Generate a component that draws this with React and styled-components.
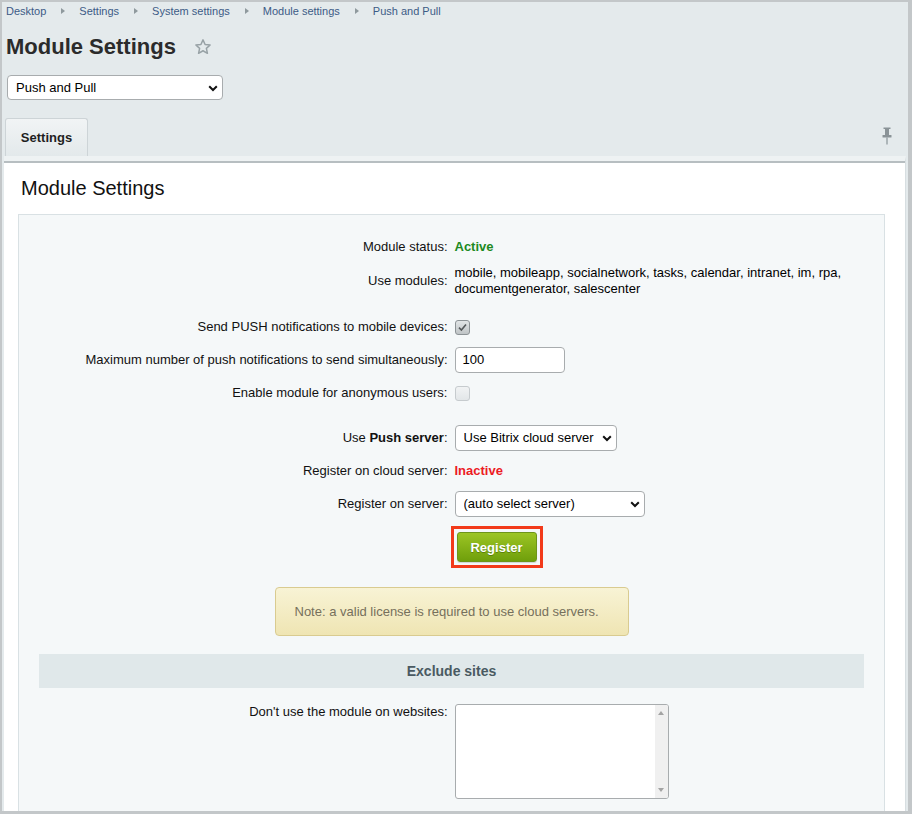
import React from 'react';
import styled, { createGlobalStyle } from 'styled-components';

const GlobalStyle = createGlobalStyle`
  html, body {
    margin: 0;
    padding: 0;
    background: #ffffff;
  }
  body {
    font-family: "Liberation Sans", Arial, sans-serif;
    font-size: 13px;
    color: #000;
  }
  * {
    box-sizing: border-box;
  }
`;

const Frame = styled.div`
  width: 912px;
  height: 814px;
  overflow: hidden;
  border-style: solid;
  border-color: #c3c7c9;
  border-width: 2px 4px 3px 2px;
  background: #e4eaec;
  padding: 0 0 0 2px;
`;

const Breadcrumbs = styled.div`
  display: flex;
  align-items: center;
  height: 17px;
  padding: 1px 0 0 2px;
  font-size: 11px;
  color: #3c5b86;
`;

const Crumb = styled.span`
  line-height: 14px;
`;

const CrumbArrow = styled.span`
  display: inline-block;
  width: 0;
  height: 0;
  margin: 0 14px 0 15px;
  border-left: 4px solid #8f999d;
  border-top: 3.5px solid transparent;
  border-bottom: 3.5px solid transparent;
`;

const TitleRow = styled.div`
  display: flex;
  align-items: center;
  gap: 18px;
  margin-top: 15px;
  padding-left: 2px;
`;

const Title = styled.h1`
  margin: 0;
  font-size: 22px;
  line-height: 26px;
  font-weight: bold;
  color: #2b2b2b;
`;

const SelectWrap = styled.div`
  position: relative;
  display: inline-block;
  width: ${p => p.$width}px;
  height: ${p => p.$height || 26}px;
`;

const Select = styled.select`
  appearance: none;
  -webkit-appearance: none;
  width: 100%;
  height: 100%;
  margin: 0;
  padding: 0 16px 0 8px;
  border: 1px solid #a8acae;
  border-radius: 4px;
  background: #fff;
  font-family: "Liberation Sans", Arial, sans-serif;
  font-size: 13px;
  color: #000;
  outline: none;
`;

const Chevron = styled.svg`
  position: absolute;
  right: 5px;
  top: 50%;
  margin-top: -3px;
  pointer-events: none;
`;

const ModuleSelect = styled.div`
  margin: 15px 0 0 3px;
`;

const TabBar = styled.div`
  display: flex;
  align-items: flex-end;
  justify-content: space-between;
  height: 38px;
  margin-top: 18px;
  padding: 0 16px 0 1px;
`;

const Tab = styled.div`
  width: 83px;
  height: 38px;
  display: flex;
  align-items: center;
  justify-content: center;
  border: 1px solid #cdd4d7;
  border-bottom: none;
  border-radius: 3px 3px 0 0;
  background: linear-gradient(#f1f4f5, #e3e9eb);
  font-weight: bold;
  font-size: 13px;
  color: #1f1f1f;
`;

const Pin = styled.svg`
  align-self: center;
  margin-bottom: 2px;
`;

const Panel = styled.div`
  margin-right: 2px;
  border-top: 5px solid #eef2f3;
  border-right: 1px solid #d7dee1;
`;

const PanelBody = styled.div`
  background: #fff;
  border-top: 2px solid #b7bec1;
  padding: 13px 20px 0 14px;
  height: 700px;
`;

const PanelHeading = styled.h2`
  margin: 0 0 14px 3px;
  font-size: 20px;
  line-height: 24px;
  font-weight: normal;
  color: #111;
`;

const FormBox = styled.div`
  background: #f5f8f9;
  border: 1px solid #d9e1e4;
  padding: 15px 20px 0 20px;
  height: 640px;
`;

const Row = styled.div`
  display: grid;
  grid-template-columns: 1fr 1fr;
  align-items: ${p => (p.$top ? 'start' : 'center')};
  min-height: ${p => p.$height || 33}px;
`;

const Label = styled.div`
  text-align: right;
  padding-right: 4px;
  line-height: 16px;
  color: #111;
`;

const Value = styled.div`
  padding-left: 3px;
  line-height: 16px;
  display: flex;
  align-items: center;
`;

const Status = styled.span`
  font-weight: bold;
  color: ${p => (p.$ok ? '#1d8a1f' : '#ec1b23')};
`;

const Spacer = styled.div`
  height: ${p => p.$h}px;
`;

const Check = styled.span`
  display: inline-block;
  width: 15px;
  height: 15px;
  margin-top: 1px;
  border-radius: 3px;
  border: 1px solid ${p => (p.$checked ? '#8d9396' : '#c6cbce')};
  background: ${p =>
    p.$checked ? 'linear-gradient(#e2e5e6, #bfc4c6)' : 'linear-gradient(#f1f3f4, #e2e6e8)'};
  position: relative;
`;

const CheckMark = styled.svg`
  position: absolute;
  left: 1px;
  top: 1px;
`;

const TextInput = styled.input`
  width: 110px;
  height: 26px;
  border: 1px solid #a8acae;
  border-radius: 4px;
  padding: 0 7px;
  font-family: "Liberation Sans", Arial, sans-serif;
  font-size: 13px;
  color: #000;
  outline: none;
`;

const ButtonRow = styled.div`
  display: grid;
  grid-template-columns: 1fr 1fr;
  margin-top: 6px;
`;

const RegisterFrame = styled.div`
  grid-column: 2;
  justify-self: start;
  margin-left: -1px;
  padding: 3px;
  border: 3px solid #f23a1a;
`;

const RegisterButton = styled.button`
  display: block;
  width: 80px;
  height: 30px;
  border: 1px solid #6d951a;
  border-radius: 3px;
  background: linear-gradient(#9cc524, #6f9f0b);
  color: #fff;
  font-family: "Liberation Sans", Arial, sans-serif;
  font-size: 13px;
  font-weight: bold;
  text-shadow: 0 1px 0 rgba(60, 90, 0, 0.5);
  box-shadow: 0 1px 1px rgba(0, 0, 0, 0.15);
  cursor: pointer;
`;

const NoteWrap = styled.div`
  display: flex;
  justify-content: center;
  margin-top: 19px;
`;

const Note = styled.div`
  width: 354px;
  height: 49px;
  display: flex;
  align-items: center;
  padding-left: 19px;
  border: 1px solid #d9cb90;
  border-radius: 4px;
  background: linear-gradient(#f8f3d5, #efe5b3);
  color: #76705c;
`;

const SectionHeader = styled.div`
  margin-top: 18px;
  height: 34px;
  display: flex;
  align-items: center;
  justify-content: center;
  background: #e0e8ea;
  font-size: 14px;
  font-weight: bold;
  color: #4a5a62;
`;

const TextAreaBox = styled.div`
  display: flex;
  width: 214px;
  height: 95px;
  border: 1px solid #a8acae;
  border-radius: 3px;
  background: #fff;
  overflow: hidden;
`;

const TextArea = styled.textarea`
  flex: 1;
  min-width: 0;
  border: none;
  resize: none;
  outline: none;
  background: transparent;
  font-family: "Liberation Sans", Arial, sans-serif;
  font-size: 13px;
`;

const ScrollTrack = styled.div`
  width: 13px;
  display: flex;
  flex-direction: column;
  justify-content: space-between;
  align-items: center;
  padding: 6px 0;
  background: #f0f0f0;
`;

const ScrollArrow = styled.span`
  width: 0;
  height: 0;
  border-left: 3.5px solid transparent;
  border-right: 3.5px solid transparent;
  ${p =>
    p.$down ? 'border-top: 4px solid #a3a3a3;' : 'border-bottom: 4px solid #a3a3a3;'}
`;

const DropSelect = ({ width, height, children }) => (
  <SelectWrap $width={width} $height={height}>
    <Select defaultValue={children[0]}>
      {children.map(o => (
        <option key={o}>{o}</option>
      ))}
    </Select>
    <Chevron width="10" height="7" viewBox="0 0 10 7">
      <path d="M1.2 1.2 L5 5 L8.8 1.2" fill="none" stroke="#111" strokeWidth="2" />
    </Chevron>
  </SelectWrap>
);

const CheckBox = ({ checked }) => (
  <Check $checked={checked}>
    {checked && (
      <CheckMark width="11" height="11" viewBox="0 0 11 11">
        <path d="M2 5.6 L4.4 8 L9 2.6" fill="none" stroke="#55595b" strokeWidth="1.6" />
      </CheckMark>
    )}
  </Check>
);

const crumbs = ['Desktop', 'Settings', 'System settings', 'Module settings', 'Push and Pull'];

const App = () => {
  return (
    <>
      <GlobalStyle />
      <Frame>
        <Breadcrumbs>
          {crumbs.map((c, i) => (
            <React.Fragment key={c}>
              {i > 0 && <CrumbArrow />}
              <Crumb>{c}</Crumb>
            </React.Fragment>
          ))}
        </Breadcrumbs>

        <TitleRow>
          <Title>Module Settings</Title>
          <svg width="18" height="18" viewBox="0 0 24 24">
            <path
              d="M12 2.5 L14.8 8.6 L21.5 9.3 L16.5 13.8 L17.9 20.4 L12 17 L6.1 20.4 L7.5 13.8 L2.5 9.3 L9.2 8.6 Z"
              fill="none"
              stroke="#98a2a6"
              strokeWidth="2"
              strokeLinejoin="round"
            />
          </svg>
        </TitleRow>

        <ModuleSelect>
          <DropSelect width={216} height={25}>{['Push and Pull']}</DropSelect>
        </ModuleSelect>

        <TabBar>
          <Tab>Settings</Tab>
          <Pin width="10" height="18" viewBox="0 0 10 18">
            <rect x="1.5" y="0.5" width="7" height="1.5" fill="#8a9397" />
            <rect x="3" y="2" width="4" height="6" fill="#8a9397" />
            <rect x="0.5" y="8" width="9" height="2.5" rx="0.5" fill="#8a9397" />
            <rect x="4.4" y="10.5" width="1.2" height="7" fill="#8a9397" />
          </Pin>
        </TabBar>

        <Panel>
          <PanelBody>
            <PanelHeading>Module Settings</PanelHeading>
            <FormBox>
              <Row>
                <Label>Module status:</Label>
                <Value><Status $ok>Active</Status></Value>
              </Row>
              <Row $height={36}>
                <Label>Use modules:</Label>
                <Value>
                  mobile, mobileapp, socialnetwork, tasks, calendar, intranet, im, rpa,
                  documentgenerator, salescenter
                </Value>
              </Row>
              <Spacer $h={11} />
              <Row>
                <Label>Send PUSH notifications to mobile devices:</Label>
                <Value><CheckBox checked /></Value>
              </Row>
              <Row>
                <Label>Maximum number of push notifications to send simultaneously:</Label>
                <Value><TextInput defaultValue="100" /></Value>
              </Row>
              <Row>
                <Label>Enable module for anonymous users:</Label>
                <Value><CheckBox /></Value>
              </Row>
              <Spacer $h={12} />
              <Row>
                <Label>Use <b>Push server</b>:</Label>
                <Value>
                  <DropSelect width={162}>{['Use Bitrix cloud server']}</DropSelect>
                </Value>
              </Row>
              <Row>
                <Label>Register on cloud server:</Label>
                <Value><Status>Inactive</Status></Value>
              </Row>
              <Row>
                <Label>Register on server:</Label>
                <Value>
                  <DropSelect width={190}>{['(auto select server)']}</DropSelect>
                </Value>
              </Row>
              <ButtonRow>
                <RegisterFrame>
                  <RegisterButton>Register</RegisterButton>
                </RegisterFrame>
              </ButtonRow>
              <NoteWrap>
                <Note>Note: a valid license is required to use cloud servers.</Note>
              </NoteWrap>
              <SectionHeader>Exclude sites</SectionHeader>
              <Spacer $h={16} />
              <Row $top>
                <Label>Don't use the module on websites:</Label>
                <Value>
                  <TextAreaBox>
                    <TextArea />
                    <ScrollTrack>
                      <ScrollArrow />
                      <ScrollArrow $down />
                    </ScrollTrack>
                  </TextAreaBox>
                </Value>
              </Row>
            </FormBox>
          </PanelBody>
        </Panel>
      </Frame>
    </>
  );
};

export default App;
